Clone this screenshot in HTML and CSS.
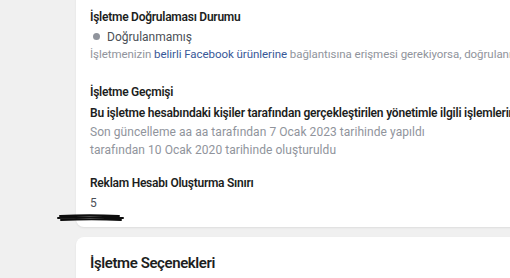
FILE: index.html
```html
<!DOCTYPE html>
<html lang="tr">
<head>
    <meta charset="UTF-8">
    <title>İşletme Bilgileri</title>
    <link rel="stylesheet" href="styles.css">
</head>
<body>
    <div class="page">
        <div class="card info-card">
            <div class="section">
                <div class="label">İşletme Doğrulaması Durumu</div>
                <div class="status"><span class="dot"></span>Doğrulanmamış</div>
                <div class="note small">İşletmenizin <a href="#">belirli Facebook ürünlerine</a> bağlantısına erişmesi gerekiyorsa, doğrulanması gerekebilir.</div>
            </div>
            <div class="section history">
                <div class="label">İşletme Geçmişi</div>
                <div class="strong">Bu işletme hesabındaki kişiler tarafından gerçekleştirilen yönetimle ilgili işlemlerin geçmişini görüntüleyin</div>
                <div class="note">Son güncelleme aa aa tarafından 7 Ocak 2023 tarihinde yapıldı</div>
                <div class="note">tarafından 10 Ocak 2020 tarihinde oluşturuldu</div>
            </div>
            <div class="section limit">
                <div class="label">Reklam Hesabı Oluşturma Sınırı</div>
                <div class="value">5</div>
            </div>
        </div>

        <svg class="scribble" width="68" height="10" viewBox="0 0 68 10">
            <path d="M3 3 C20 2 45 2 62 3 M1 5 C22 4 44 4 66 5 M4 7 C24 6 46 6 64 7 M8 4 C28 4 48 4 60 6" stroke="#0d0d0d" stroke-width="2" fill="none" stroke-linecap="round"/>
        </svg>

        <div class="card options-card">
            <h2>İşletme Seçenekleri</h2>
        </div>
    </div>
</body>
</html>
```

FILE: styles.css
```css
body {
    margin: 0;
    background-color: #f0f0f0;
    font-family: Roboto, "Liberation Sans", Arial, sans-serif;
    font-size: 12px;
    color: #1c1e21;
    overflow: hidden;
}
.page {
    position: relative;
    display: flow-root;
    padding-left: 76px;
}
.card {
    background-color: white;
    border-radius: 8px;
    width: 520px;
    box-shadow: 0 1px 2px rgba(0,0,0,0.08);
}
.info-card {
    margin-top: -10px;
    padding: 18px 0 15px 14px;
}
.label {
    font-weight: 600;
    line-height: 18px;
    margin-bottom: 2px;
    letter-spacing: -0.25px;
    color: #1c1e21;
}
.status, .value {
    line-height: 18px;
    color: #4b4f56;
}
.dot {
    display: inline-block;
    width: 7px;
    height: 7px;
    border-radius: 50%;
    background-color: #90949c;
    margin: 0 7px 1px 3px;
}
.note {
    line-height: 18px;
    color: #90949c;
    white-space: nowrap;
    letter-spacing: 0.05px;
}
.note.small {
    font-size: 11.5px;
    letter-spacing: -0.05px;
    margin-top: -1px;
    margin-bottom: 1px;
}
.note a {
    color: #385898;
    text-decoration: none;
}
.strong {
    font-weight: 600;
    line-height: 18px;
    white-space: nowrap;
    letter-spacing: -0.2px;
    margin-top: 3px;
    margin-bottom: 1px;
}
.history {
    margin-top: 20px;
}
.limit {
    margin-top: 15px;
}
.scribble {
    position: absolute;
    left: 57px;
    top: 213px;
}
.options-card {
    margin-top: 10px;
    padding: 16px 0 20px 14px;
}
.options-card h2 {
    margin: 0;
    font-size: 15px;
    font-weight: 600;
    letter-spacing: -0.4px;
    line-height: 20px;
}
```
